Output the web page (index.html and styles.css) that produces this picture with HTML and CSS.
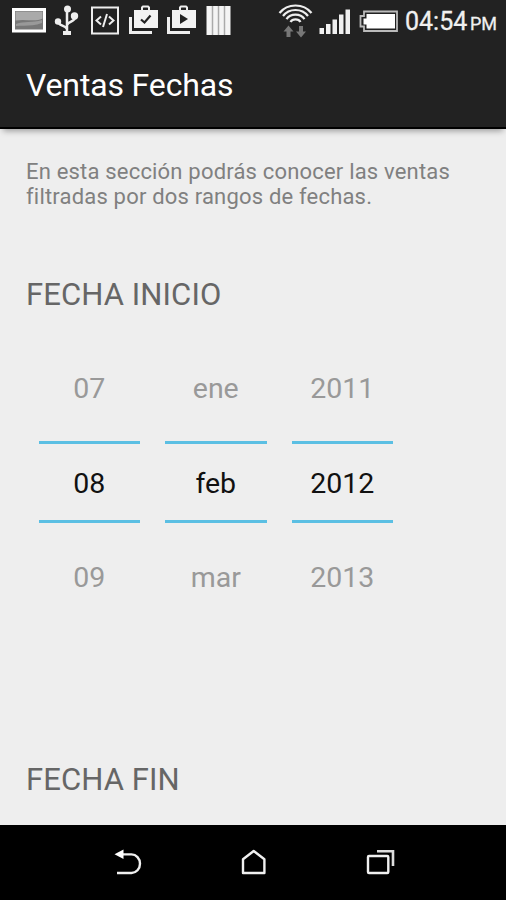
FILE: index.html
```html
<!DOCTYPE html>
<html lang="es">
<head>
	<meta charset="UTF-8">
	<title>Ventas Fechas</title>
	<link rel="stylesheet" href="styles.css">
</head>
<body>
	<div class="statusbar">
		<div class="notifications">
			<svg width="50" height="42" viewBox="0 0 50 42">
				<rect x="13.5" y="9.5" width="31" height="21.5" fill="#777" stroke="#fff" stroke-width="3"/>
				<path d="M15.500 11.500h27v7c-8 4-16 0-27 2z" fill="#aaa"/>
				<path d="M16 24c8-3 16-1 26-4v3c-10 4-18 2-26 3z" fill="#999"/>
			</svg>
			<svg width="34" height="42" viewBox="50 0 34 42">
				<g fill="none" stroke="#eee" stroke-width="2.5">
					<path d="M67 9v22M67 29c-2-4-9-3-9-8M67 25c2-4 8-3 8-8"/>
				</g>
				<g fill="#eee">
					<circle cx="67.5" cy="9" r="3.5"/>
					<circle cx="58" cy="21.5" r="3.2"/>
					<circle cx="74.5" cy="16" r="3.7"/>
					<path d="M63 31h8v4h-8z"/>
				</g>
			</svg>
			<svg width="40" height="42" viewBox="84 0 40 42">
				<rect x="92" y="7.5" width="26" height="26" fill="none" stroke="#eee" stroke-width="2"/>
				<path d="M101 16.500l-4.500 4 4.500 4M109 16.500l4.500 4-4.500 4M107 14l-4 13" fill="none" stroke="#eee" stroke-width="2"/>
			</svg>
			<svg width="38" height="42" viewBox="124 0 38 42">
				<path d="M130.500 17v15.500H152" fill="none" stroke="#eee" stroke-width="3"/>
				<path d="M134 10h24v18h-24z" fill="#f2f2f2"/>
				<path d="M142 11V7.500l1-1h5l1 1V11" fill="none" stroke="#eee" stroke-width="2"/>
				<path d="M141 19.500l3.500 3 6-7" fill="none" stroke="#222" stroke-width="2.200"/>
			</svg>
			<svg width="38" height="42" viewBox="162 0 38 42">
				<path d="M168.500 17v15.500H190" fill="none" stroke="#eee" stroke-width="3"/>
				<path d="M172 10h24v18h-24z" fill="#f2f2f2"/>
				<path d="M180 11V7.500l1-1h5l1 1V11" fill="none" stroke="#eee" stroke-width="2"/>
				<path d="M180 14l8 5-8 5z" fill="#222"/>
			</svg>
			<svg width="36" height="42" viewBox="200 0 36 42">
				<rect x="206.5" y="6" width="24" height="29" fill="#f4f4f4"/>
				<path d="M212.500 6v29M218.500 6v29M224.500 6v29" stroke="#aaa" stroke-width="1.500"/>
			</svg>
		</div>
		<div class="system">
			<svg width="41" height="42" viewBox="274 0 41 42">
				<g fill="none" stroke="#eee" stroke-width="2.2">
					<path d="M279.500 13c8-10 24-10 32 0"/>
					<path d="M283 16c6-8 19-8 25 0"/>
					<path d="M286.500 19.200c4-6 14-6 18 0"/>
					<path d="M290.500 22c2-3.500 8-3.500 10 0"/>
				</g>
				<path d="M288.500 25.500l5 6h-3V37h-4v-5.500h-3zM301 37.500l5-6h-3V26h-4v5.500h-3z" fill="#777"/>
			</svg>
			<svg width="40" height="42" viewBox="315 0 40 42">
				<path d="M319.500 28h4.500v6h-4.500zM326 24h4.500v10H326zM332.500 19.500h4.500V34h-4.500zM339 14.500h4.500V34H339zM345.500 9.500h4.500V34h-4.500z" fill="#f0f0f0"/>
			</svg>
			<svg width="50" height="42" viewBox="355 0 50 42">
				<path d="M364 11.500h33v19.500h-33v-4.500h-3.500V16h3.500z" fill="none" stroke="#bbb" stroke-width="1.800"/>
				<path d="M366.500 14H395v14.500h-28.500v-4h-3v-6h3z" fill="#fff"/>
			</svg>
			<span class="clock">04:54</span>
			<span class="ampm">PM</span>
		</div>
	</div>

	<div class="appbar">
		<h1 class="title">Ventas Fechas</h1>
	</div>

	<div class="content">
		<p class="intro">En esta sección podrás conocer las ventas<br>filtradas por dos rangos de fechas.</p>

		<h2 class="label">FECHA INICIO</h2>
		<div class="datepicker">
			<div class="column">
				<span class="item prev">07</span>
				<span class="item current">08</span>
				<span class="item next">09</span>
			</div>
			<div class="column">
				<span class="item prev">ene</span>
				<span class="item current">feb</span>
				<span class="item next">mar</span>
			</div>
			<div class="column">
				<span class="item prev">2011</span>
				<span class="item current">2012</span>
				<span class="item next">2013</span>
			</div>
		</div>

		<h2 class="label label-end">FECHA FIN</h2>
	</div>

	<div class="navbar">
		<svg width="40" height="40" viewBox="108 842 40 40">
			<path d="M117 873h14.500a8.500 9.300 0 0 0 0-18.600H121" fill="none" stroke="#f0f0f0" stroke-width="2.400"/>
			<path d="M114.500 854.300l9-4.800v9.600z" fill="#fff"/>
		</svg>
		<svg width="40" height="40" viewBox="234 842 40 40">
			<path d="M243 859.300l10.700-8.300 10.700 8.300V873H243z" fill="none" stroke="#f0f0f0" stroke-width="2.400" stroke-linejoin="round"/>
		</svg>
		<svg width="40" height="40" viewBox="360 842 40 40">
			<rect x="368" y="856" width="20.3" height="17" rx="1" fill="none" stroke="#f0f0f0" stroke-width="2.400"/>
			<path d="M377 851.200h16V866" fill="none" stroke="#ddd" stroke-width="2.600"/>
		</svg>
	</div>
</body>
</html>
```

FILE: styles.css
```css
*{
	margin: 0;
	padding: 0;
	box-sizing: border-box;
}
body{
	height: 900px;
	display: flex;
	flex-direction: column;
	overflow: hidden;
	background: #eee;
	font-family: Roboto, "Liberation Sans", sans-serif;
}
svg{
	display: block;
	flex: none;
}
.statusbar{
	height: 42px;
	flex: none;
	display: flex;
	justify-content: space-between;
	background: #222;
}
.notifications,
.system{
	display: flex;
}
.system{
	width: 232px;
	color: #f0f0f0;
	line-height: 43px;
	white-space: nowrap;
}
.clock{
	width: 65px;
	font-size: 25px;
	-webkit-text-stroke: 0.3px #f0f0f0;
}
.ampm{
	padding-top: 2px;
	font-size: 18px;
	-webkit-text-stroke: 0.3px #f0f0f0;
}
.appbar{
	height: 87px;
	flex: none;
	padding-left: 26px;
	background: #222;
	border-bottom: 2px solid #000;
	box-shadow: 0 5px 6px -3px rgba(0,0,0,0.35);
}
.title{
	color: #fff;
	font-size: 32px;
	font-weight: 400;
	letter-spacing: -0.15px;
	line-height: 87px;
}
.content{
	height: 696px;
	flex: none;
	padding: 30px 26px 0;
}
.intro{
	height: 51px;
	color: #808080;
	font-size: 22px;
	letter-spacing: 0.19px;
	line-height: 25px;
	white-space: nowrap;
}
.label{
	margin-top: 65px;
	color: #666;
	font-size: 31px;
	font-weight: 400;
	letter-spacing: 0.1px;
	line-height: 40px;
}
.datepicker{
	display: flex;
	gap: 25px;
	margin-top: 26px;
	padding-left: 12.5px;
}
.column{
	width: 101.5px;
	display: flex;
	flex-direction: column;
}
.item{
	height: 100px;
	color: #999;
	font-size: 28.5px;
	text-align: center;
}
.prev{
	line-height: 96px;
}
.current{
	height: 82px;
	color: #111;
	line-height: 79px;
	border-top: 3px solid #5bbfe3;
	border-bottom: 3px solid #5bbfe3;
}
.next{
	line-height: 110px;
}
.label-end{
	margin-top: 137px;
}
.navbar{
	height: 75px;
	flex: none;
	display: flex;
	justify-content: center;
	gap: 86px;
	padding: 17px 0 0 2px;
	background: #000;
}
```
